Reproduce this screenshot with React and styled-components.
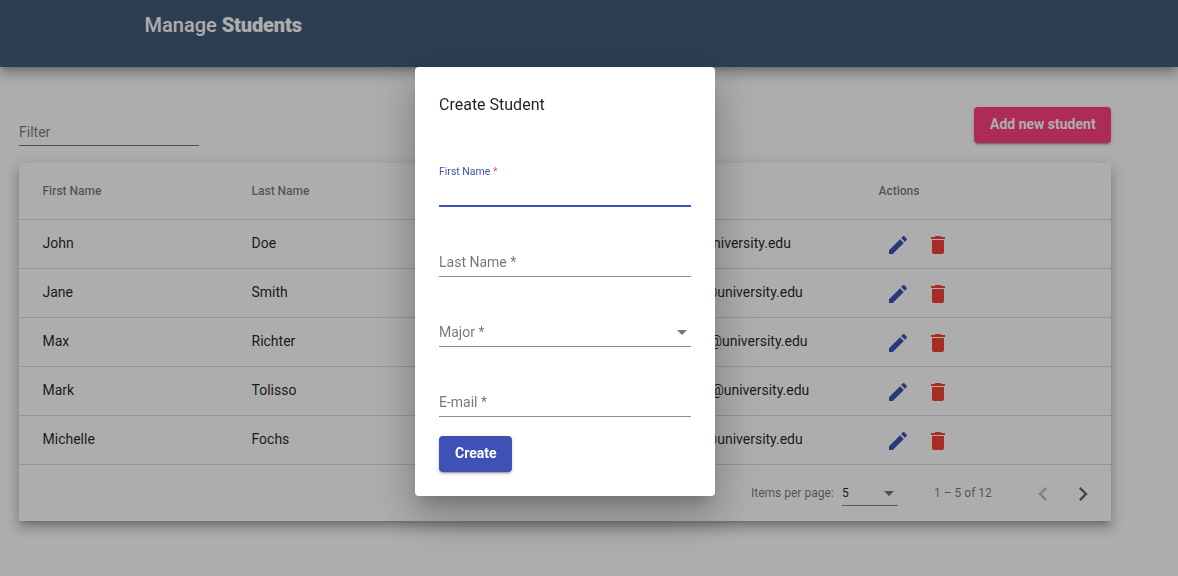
import React from 'react';
import styled, { createGlobalStyle } from 'styled-components';

const GlobalStyle = createGlobalStyle`
  * { box-sizing: border-box; }
  body {
    margin: 0;
    background: #fff;
    color: rgba(0, 0, 0, 0.87);
    font: 400 14px/20px Roboto, sans-serif;
  }
  button { font-family: inherit; border: 0; padding: 0; background: none; }
`;

const Page = styled.div`
  height: 576px;
  overflow: hidden;
`;

const Header = styled.header`
  height: 67px;
  padding: 9px 0 0 144.5px;
  background: #435c7b;
  box-shadow: 0 5px 5px -3px rgba(0, 0, 0, 0.2), 0 8px 10px 1px rgba(0, 0, 0, 0.14),
    0 3px 14px 2px rgba(0, 0, 0, 0.12);
`;

const Title = styled.h1`
  margin: 0;
  color: #fff;
  font-size: 20px;
  font-weight: 500;
  line-height: 32px;
  b { font-weight: 900; letter-spacing: -0.15px; }
`;

const Content = styled.main`
  width: 1111px;
  padding: 40px 0 0 19px;
`;

const Toolbar = styled.div`
  display: flex;
  justify-content: space-between;
  height: 56px;
`;

const Filter = styled.div`
  width: 180px;
  height: 39px;
  padding-top: 15px;
  color: rgba(0, 0, 0, 0.54);
  border-bottom: 1px solid rgba(0, 0, 0, 0.54);
`;

const RaisedButton = styled.button`
  width: ${(p) => p.$width};
  height: 36px;
  padding: 0 16px 2px;
  border-radius: 4px;
  background: ${(p) => p.$color};
  color: #fff;
  font-size: 14px;
  font-weight: 700;
  line-height: 34px;
  white-space: nowrap;
  box-shadow: 0 3px 1px -2px rgba(0, 0, 0, 0.2), 0 2px 2px 0 rgba(0, 0, 0, 0.14),
    0 1px 5px 0 rgba(0, 0, 0, 0.12);
`;

const Card = styled.section`
  height: 358px;
  background: #fff;
  box-shadow: 0 5px 5px -3px rgba(0, 0, 0, 0.2), 0 8px 10px 1px rgba(0, 0, 0, 0.14),
    0 3px 14px 2px rgba(0, 0, 0, 0.12);
`;

const Row = styled.div`
  display: grid;
  grid-template-columns: 209px 209px 209px 209px 1fr;
  align-items: center;
  height: 49px;
  padding: 0 24px 2px 23.5px;
  border-bottom: 1px solid rgba(0, 0, 0, 0.14);
`;

const HeadRow = styled(Row)`
  height: 57px;
  padding-bottom: 0;
  color: rgba(0, 0, 0, 0.54);
  font-size: 12px;
  font-weight: 500;
`;

const Cell = styled.span`
  grid-column: ${(p) => p.$col};
`;

const Actions = styled.span`
  grid-column: 5;
  display: flex;
  gap: 16px;
  padding: 3px 0 0 0;
  margin-left: 7.4px;
`;

const Icon = styled.svg`
  display: block;
  width: ${(p) => p.$size || 24}px;
  height: ${(p) => p.$size || 24}px;
  fill: ${(p) => p.$color};
`;

const Paginator = styled.div`
  display: flex;
  height: 56px;
  padding-left: 732px;
  color: rgba(0, 0, 0, 0.54);
  font-size: 12px;
  line-height: 56px;
`;

const PageLabel = styled.span`
  width: 91px;
`;

const PageSize = styled.div`
  display: flex;
  justify-content: space-between;
  align-items: center;
  width: 56px;
  height: 27px;
  margin-top: 14px;
  padding: 2px 4px 0 0;
  color: rgba(0, 0, 0, 0.87);
  line-height: 26px;
  border-bottom: 1px solid rgba(0, 0, 0, 0.5);
`;

const Range = styled.span`
  width: 95px;
  margin-left: 36px;
`;

const PageArrow = styled.button`
  width: 40px;
  height: 58px;
`;

const Caret = styled.i`
  border: 5px solid transparent;
  border-top-color: rgba(0, 0, 0, 0.54);
  border-bottom-width: 0;
`;

const Overlay = styled.div`
  position: fixed;
  inset: 0;
  padding: 67px 0 0 415px;
  background: rgba(0, 0, 0, 0.32);
`;

const Dialog = styled.div`
  width: 300px;
  height: 429px;
  padding: 24px;
  border-radius: 4px;
  background: #fff;
  box-shadow: 0 11px 15px -7px rgba(0, 0, 0, 0.2), 0 24px 38px 3px rgba(0, 0, 0, 0.14),
    0 9px 46px 8px rgba(0, 0, 0, 0.12);
`;

const DialogTitle = styled.h2`
  margin: 0 0 34px;
  font-size: 16px;
  font-weight: 400;
  line-height: 28px;
`;

const Field = styled.div`
  display: flex;
  justify-content: space-between;
  align-items: flex-end;
  height: 70px;
  padding: 0 4px 4px 0;
  color: rgba(0, 0, 0, 0.54);
  border-bottom: 1px solid rgba(0, 0, 0, 0.45);
  ${Caret} { margin-bottom: 7px; }
`;

const FocusedField = styled.div`
  height: 54px;
  padding-top: 9px;
  color: #3f51b5;
  font-size: 10.5px;
  border-bottom: 2px solid #3f51b5;
  em { color: #ff4081; font-style: normal; }
`;

const DialogActions = styled.div`
  padding-top: 19px;
`;

const EDIT =
  'M3 17.25V21h3.75L17.81 9.94l-3.75-3.75L3 17.25zM20.71 7.04c.39-.39.39-1.02 0-1.41l-2.34-2.34c-.39-.39-1.02-.39-1.41 0l-1.83 1.83 3.75 3.75 1.83-1.83z';
const DELETE = 'M6 19c0 1.1.9 2 2 2h8c1.1 0 2-.9 2-2V7H6v12zM19 4h-3.5l-1-1h-5l-1 1H5v2h14V4z';
const PREV = 'M15.41 7.41L14 6l-6 6 6 6 1.41-1.41L10.83 12z';
const NEXT = 'M10 6L8.59 7.41 13.17 12l-4.58 4.59L10 18l6-6z';

const students = [
  ['John', 'Doe', 'doe@university.edu'],
  ['Jane', 'Smith', 'smith@university.edu'],
  ['Max', 'Richter', 'richter@university.edu'],
  ['Mark', 'Tolisso', 'tolisso@university.edu'],
  ['Michelle', 'Fochs', 'fochs@university.edu'],
];

const Glyph = ({ d, color, size }) => (
  <Icon viewBox="0 0 24 24" $color={color} $size={size}>
    <path d={d} />
  </Icon>
);

export default function App() {
  return (
    <Page>
      <GlobalStyle />
      <Header>
        <Title>Manage <b>Students</b></Title>
      </Header>
      <Content>
        <Toolbar>
          <Filter>Filter</Filter>
          <RaisedButton $color="#ff4081" $width="137px">Add new student</RaisedButton>
        </Toolbar>
        <Card>
          <HeadRow>
            <Cell $col={1}>First Name</Cell>
            <Cell $col={2}>Last Name</Cell>
            <Cell $col={5}>Actions</Cell>
          </HeadRow>
          {students.map(([first, last, email]) => (
            <Row key={email}>
              <Cell $col={1}>{first}</Cell>
              <Cell $col={2}>{last}</Cell>
              <Cell $col={4}>{email}</Cell>
              <Actions>
                <Glyph d={EDIT} color="#3f51b5" />
                <Glyph d={DELETE} color="#f44336" />
              </Actions>
            </Row>
          ))}
          <Paginator>
            <PageLabel>Items per page:</PageLabel>
            <PageSize>5<Caret /></PageSize>
            <Range>1 – 5 of 12</Range>
            <PageArrow><Glyph d={PREV} color="rgba(0,0,0,.26)" size={28} /></PageArrow>
            <PageArrow><Glyph d={NEXT} color="rgba(0,0,0,.6)" size={28} /></PageArrow>
          </Paginator>
        </Card>
      </Content>
      <Overlay>
        <Dialog>
          <DialogTitle>Create Student</DialogTitle>
          <FocusedField>First Name <em>*</em></FocusedField>
          <Field>Last Name *</Field>
          <Field>Major *<Caret /></Field>
          <Field>E-mail *</Field>
          <DialogActions>
            <RaisedButton $color="#3f51b5" $width="73px">Create</RaisedButton>
          </DialogActions>
        </Dialog>
      </Overlay>
    </Page>
  );
}
